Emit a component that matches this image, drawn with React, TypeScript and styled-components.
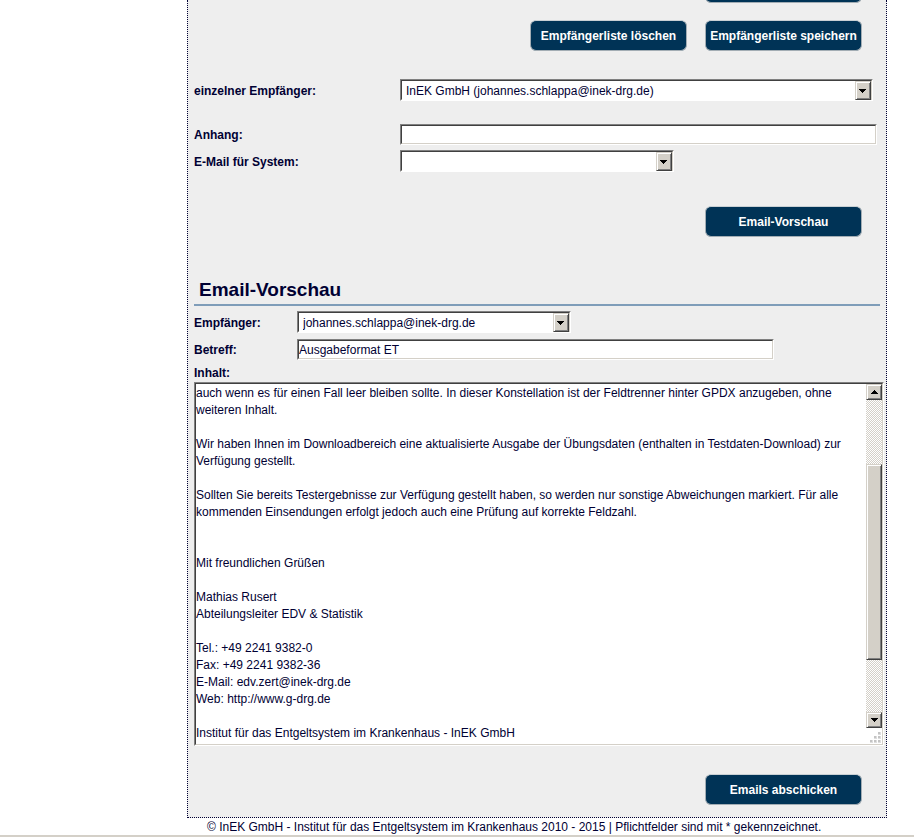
import React from "react";
import styled, { createGlobalStyle } from "styled-components";

const GlobalStyle = createGlobalStyle`
  *, *::before, *::after { box-sizing: border-box; }
  body {
    margin: 0;
    background: #fff;
    color: #000033;
    font: 12px/17px "Liberation Sans", Arial, Helvetica, sans-serif;
  }
  button, input, select, textarea { font: inherit; color: inherit; margin: 0; }
`;

const Page = styled.div`
  padding: 0 27px 0 187px;
  border-bottom: 2px solid #d4d0c8;
`;

const Panel = styled.main`
  display: flex;
  flex-direction: column;
  padding: 0 2px 12px 6px;
  background: #eeeeee;
  border: 1px dotted #000033;
  border-top: 0;
`;

const Actions = styled.div<{ $top: number }>`
  display: flex;
  justify-content: flex-end;
  gap: 18px;
  margin-top: ${(p) => p.$top}px;
  padding-right: 22px;
`;

const ClippedActions = styled(Actions)`
  align-items: flex-end;
  height: 3px;
  overflow: hidden;
`;

const ActionButton = styled.button`
  flex: none;
  width: 157px;
  height: 31px;
  padding: 2px 0 0;
  color: #fff;
  font-weight: bold;
  white-space: nowrap;
  background: #003356;
  border: 1px solid #a3adb4;
  border-top-color: #c9d0d4;
  border-radius: 6px;
  cursor: pointer;
`;

const Row = styled.div<{ $label: number; $top: number }>`
  display: grid;
  grid-template-columns: ${(p) => p.$label}px minmax(0, 1fr);
  align-items: center;
  margin-top: ${(p) => p.$top}px;
`;

const Label = styled.label`
  padding-top: 2px;
  font-weight: bold;
`;

const Frame = styled.div<{ $width?: number }>`
  width: ${(p) => (p.$width ? `${p.$width}px` : "auto")};
  max-width: 100%;
  background: #fff;
  border: 1px solid;
  border-color: #808080 #fff #fff #808080;
`;

const innerEdge = `
  border: 1px solid;
  border-color: #404040 #d4d0c8 #d4d0c8 #404040;
`;

const TextInput = styled.input`
  ${innerEdge}
  display: block;
  width: 100%;
  height: 19px;
  padding: 0;
  background: #fff;
  border-radius: 0;
  outline: 0;
`;

const SelectInner = styled.div`
  ${innerEdge}
  display: grid;
  height: 20px;
`;

const Select = styled.select`
  grid-area: 1 / 1;
  width: 100%;
  padding: 2px 20px 0 4px;
  appearance: none;
  background: #fff;
  border: 0;
  border-radius: 0;
  outline: 0;
`;

const raised = `
  background: #d4d0c8;
  border: 1px solid;
  border-color: #d4d0c8 #404040 #404040 #d4d0c8;
  box-shadow: inset 1px 1px #fff, inset -1px -1px #808080;
`;

const DropArrow = styled.span`
  ${raised}
  grid-area: 1 / 1;
  justify-self: end;
  display: grid;
  place-items: center;
  width: 16px;
  padding-right: 1px;
  pointer-events: none;
`;

const Heading = styled.h2`
  margin: 40px 4px 0 0;
  padding: 0 0 2px 5px;
  font-size: 19px;
  line-height: 25px;
  border-bottom: 2px solid #7f9db9;
`;

const ContentLabel = styled(Label)`
  margin-top: 3px;
`;

const ContentInner = styled.div`
  ${innerEdge}
  display: flex;
  height: 362px;
`;

const Message = styled.textarea`
  flex: 1;
  min-width: 0;
  padding: 1px 0 0;
  background: #fff;
  border: 0;
  outline: 0;
  resize: none;
  overflow: hidden;
`;

const ScrollBar = styled.div`
  display: flex;
  flex-direction: column;
  width: 16px;
`;

const ScrollButton = styled.button`
  ${raised}
  flex: none;
  display: grid;
  place-items: center;
  height: 16px;
  padding: 0;
`;

const Track = styled.div`
  flex: 1;
  display: flex;
  flex-direction: column;
  background: repeating-conic-gradient(#d4d0c8 0 25%, #fff 0 50%) 0 0 / 2px 2px;
`;

const TrackSpace = styled.div<{ $share: number }>`
  flex: ${(p) => p.$share} 0 0;
`;

const Thumb = styled.div`
  ${raised}
  flex: 196 0 0;
`;

const Footer = styled.footer`
  padding: 1px 0 0 20px;
  line-height: 16px;
`;

const Grip = styled.svg`
  flex: none;
  display: block;
`;

function Arrow({ up = false }: { up?: boolean }) {
  return (
    <svg width="7" height="4" viewBox="0 0 7 4" shapeRendering="crispEdges" aria-hidden="true">
      <path d={up ? "M3 0h1v1h1v1h1v1h1v1H0V3h1V2h1V1h1z" : "M0 0h7v1H6v1H5v1H4v1H3V3H2V2H1V1H0z"} fill="#000" />
    </svg>
  );
}

function DropDown({ id, width, option }: { id: string; width: number; option: string }) {
  return (
    <Frame $width={width}>
      <SelectInner>
        <Select id={id}>
          <option>{option}</option>
        </Select>
        <DropArrow><Arrow /></DropArrow>
      </SelectInner>
    </Frame>
  );
}

const gripDots = [[12, 0], [8, 4], [12, 4], [4, 8], [8, 8], [12, 8]];

const message = `auch wenn es für einen Fall leer bleiben sollte. In dieser Konstellation ist der Feldtrenner hinter GPDX anzugeben, ohne weiteren Inhalt.

Wir haben Ihnen im Downloadbereich eine aktualisierte Ausgabe der Übungsdaten (enthalten in Testdaten-Download) zur Verfügung gestellt.

Sollten Sie bereits Testergebnisse zur Verfügung gestellt haben, so werden nur sonstige Abweichungen markiert. Für alle kommenden Einsendungen erfolgt jedoch auch eine Prüfung auf korrekte Feldzahl.


Mit freundlichen Grüßen

Mathias Rusert
Abteilungsleiter EDV & Statistik

Tel.: +49 2241 9382-0
Fax: +49 2241 9382-36
E-Mail: edv.zert@inek-drg.de
Web: http://www.g-drg.de

Institut für das Entgeltsystem im Krankenhaus - InEK GmbH`;

export default function App() {
  return (
    <>
      <GlobalStyle />
      <Page>
        <Panel>
          <ClippedActions $top={0}>
            <ActionButton type="button" aria-label="Empfängerliste" />
          </ClippedActions>
          <Actions $top={17}>
            <ActionButton type="button">Empfängerliste löschen</ActionButton>
            <ActionButton type="button">Empfängerliste speichern</ActionButton>
          </Actions>

          <Row $label={206} $top={28}>
            <Label htmlFor="single">einzelner Empfänger:</Label>
            <DropDown id="single" width={473} option="InEK GmbH (johannes.schlappa@inek-drg.de)" />
          </Row>
          <Row $label={206} $top={23}>
            <Label htmlFor="attachment">Anhang:</Label>
            <Frame $width={477}><TextInput id="attachment" /></Frame>
          </Row>
          <Row $label={206} $top={5}>
            <Label htmlFor="system">E-Mail für System:</Label>
            <DropDown id="system" width={274} option="" />
          </Row>
          <Actions $top={34}>
            <ActionButton type="button">Email-Vorschau</ActionButton>
          </Actions>

          <Heading>Email-Vorschau</Heading>
          <Row $label={103} $top={5}>
            <Label htmlFor="recipient">Empfänger:</Label>
            <DropDown id="recipient" width={274} option="johannes.schlappa@inek-drg.de" />
          </Row>
          <Row $label={103} $top={6}>
            <Label htmlFor="subject">Betreff:</Label>
            <Frame $width={477}><TextInput id="subject" defaultValue="Ausgabeformat ET" /></Frame>
          </Row>
          <ContentLabel htmlFor="content">Inhalt:</ContentLabel>
          <Frame>
            <ContentInner>
              <Message id="content" defaultValue={message} spellCheck={false} />
              <ScrollBar>
                <ScrollButton type="button" aria-label="Nach oben"><Arrow up /></ScrollButton>
                <Track>
                  <TrackSpace $share={64} />
                  <Thumb />
                  <TrackSpace $share={52} />
                </Track>
                <ScrollButton type="button" aria-label="Nach unten"><Arrow /></ScrollButton>
                <Grip width="16" height="16" viewBox="0 0 16 16" shapeRendering="crispEdges" aria-hidden="true">
                  {gripDots.map(([x, y]) => (
                    <g key={`${x}-${y}`}>
                      <rect x={x} y={y + 4} width="3" height="3" fill="#dedede" />
                      <rect x={x} y={y + 4} width="2" height="2" fill="#c4c4c4" />
                    </g>
                  ))}
                </Grip>
              </ScrollBar>
            </ContentInner>
          </Frame>
          <Actions $top={28}>
            <ActionButton type="button">Emails abschicken</ActionButton>
          </Actions>
        </Panel>
        <Footer>
          © InEK GmbH - Institut für das Entgeltsystem im Krankenhaus 2010 - 2015 | Pflichtfelder sind mit * gekennzeichnet.
        </Footer>
      </Page>
    </>
  );
}
